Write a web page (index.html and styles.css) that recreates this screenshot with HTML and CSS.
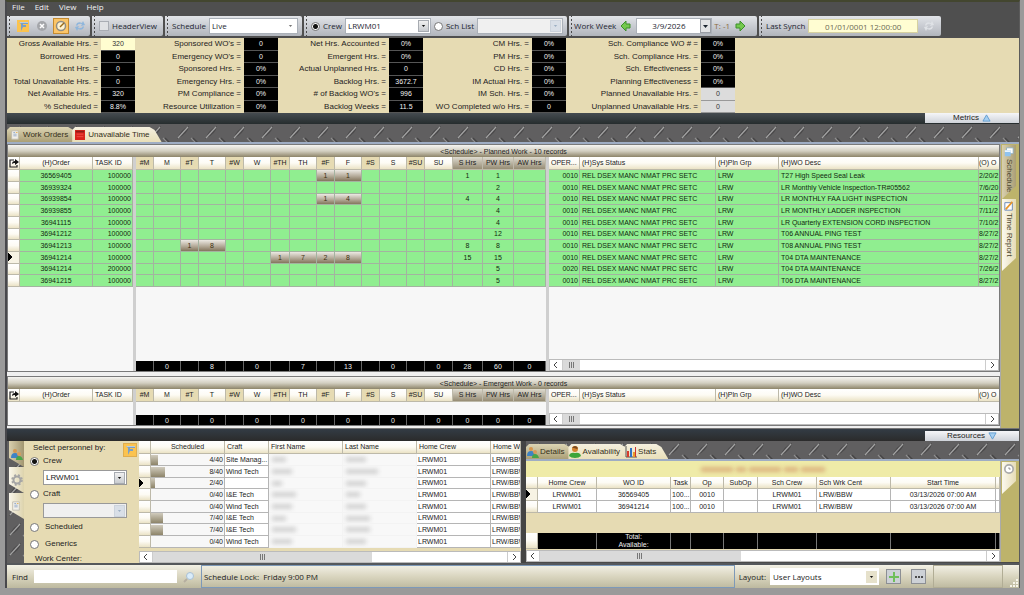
FILE: index.html
```html
<!DOCTYPE html>
<html lang="en">
<head>
<meta charset="utf-8">
<title>Schedule</title>
<link rel="stylesheet" href="styles.css">
</head>
<body>
<svg class="defs" width="0" height="0" aria-hidden="true">
  <defs>
    <pattern id="plate" width="28" height="20" patternUnits="userSpaceOnUse">
      <rect width="28" height="20" fill="#605f60"/>
      <path d="M2 15 Q6 5 14 2 Q13 10 2 15z" fill="#4a494a"/>
      <path d="M3 14 L13 3" stroke="#a3a3a3" stroke-width="1.200"/>
      <path d="M16 14 L22 20" stroke="#8e8e8e" stroke-width="1.200"/>
      <path d="M18 14 L24 20" stroke="#464546" stroke-width="1.500"/>
    </pattern>
    <symbol id="i-people" viewBox="0 0 12 12"><circle cx="4" cy="3" r="2" fill="#d6964e"/><path d="M0 10Q0 5 4 5t4 5z" fill="#3e83c4"/><circle cx="8" cy="6" r="2" fill="#d99a5a"/><path d="M5 12Q5 8 8 8t4 4z" fill="#48a548"/></symbol>
    <symbol id="i-person" viewBox="0 0 12 12"><circle cx="6" cy="3" r="3" fill="#d3842f"/><path d="M3 2Q6-2 9 2L8 3 5 2z" fill="#7c4a1c"/><path d="M0 10Q1 6 6 7q5-1 6 3-2 2-6 2t-6-2z" fill="#3da53a"/></symbol>
    <symbol id="i-stats" viewBox="0 0 12 12"><path d="M1 0v11h11" stroke="#555" fill="none"/><path d="M2 5h2v6H2z" fill="#d83c2c"/><path d="M5 2h2v9H5z" fill="#3471c2"/><path d="M8 6h2v5H8z" fill="#e89b28"/><path d="M10 1h1v10h-1z" fill="#c33"/></symbol>
    <symbol id="i-caret" viewBox="0 0 5 3"><path d="M0 0h5L2.500 3z" fill="currentColor"/></symbol>
    <symbol id="i-export" viewBox="0 0 10 10"><path d="M5 2H1v7h7V7" fill="none" stroke="#222" stroke-width="1.200"/><path d="M3 6Q3 3 6 3V1l4 3-4 3V5Q4 5 3 6z" fill="#111"/></symbol>
    <symbol id="i-filter" viewBox="0 0 12 12"><path d="M2 2h9v2H6v1h3v2H6l-2 4V4z" fill="#7ba0c4"/><path d="M2 2h9v1H3z" fill="#b7cee2"/></symbol>
    <symbol id="i-sync" viewBox="0 0 12 12"><path d="M2 5Q3 1 8 3l1-2 2 4-4 1 1-2Q4 3 3 6z" fill="currentColor"/><path d="M10 7Q9 11 4 9l-1 2-2-4 4-1-1 2q4 1 5-2z" fill="currentColor"/></symbol>
    <symbol id="i-arrow" viewBox="0 0 12 12"><path d="M6 1l5 5-5 5V8H2V4h4z" fill="#74c94e" stroke="#3c8f2b" stroke-width="1"/></symbol>
    <symbol id="i-doc" viewBox="0 0 12 12"><path d="M2 1h8v10H2z" fill="#f2f0ea" stroke="#bdb9ac"/><path d="M4 3h2M4 5h4M4 7h4" stroke="#8aa2c4"/><path d="M7 3h2" stroke="#e4ac45"/></symbol>
  </defs>
</svg>
<div class="shell">
  <nav class="menubar"><a href="#file">File</a><a href="#edit">Edit</a><a href="#view">View</a><a href="#help">Help</a></nav>

  <header class="toolbar">
    <div class="tools tools-icons">
      <button class="tool" aria-label="Filter"><svg class="ic12 amber"><use href="#i-filter"/></svg></button>
      <button class="tool" aria-label="Cancel"><svg class="ic12" viewBox="0 0 12 12"><circle cx="6" cy="6" r="5" fill="#a4a6aa"/><path d="M4 4l4 4M8 4L4 8" stroke="#fff" stroke-width="1.500"/></svg></button>
      <button class="tool active" aria-label="Edit schedule"><svg class="ic12" viewBox="0 0 12 12"><circle cx="6" cy="6" r="4.500" fill="#fff3cf" stroke="#8f8d85" stroke-width="1.500"/><path d="M5 7l4-4" stroke="#9a6a18" stroke-width="1.500"/></svg></button>
      <button class="tool sync" aria-label="Refresh"><svg class="ic12"><use href="#i-sync"/></svg></button>
    </div>
    <div class="tools tools-header"><label><input type="checkbox" class="check">HeaderView</label></div>
    <div class="tools tools-schedule"><label for="schedule">Schedule</label>
      <span class="combo grow flat"><select id="schedule"><option>Live</option></select><svg class="caret"><use href="#i-caret"/></svg></span></div>
    <div class="tools tools-crew">
      <label><input type="radio" name="source" class="radio" checked>Crew</label>
      <span class="combo grow"><select aria-label="Crew"><option>LRWM01</option></select><svg class="caret"><use href="#i-caret"/></svg></span>
      <label><input type="radio" name="source" class="radio">Sch List</label>
      <span class="combo grow off"><select aria-label="Schedule list" disabled><option></option></select><svg class="caret"><use href="#i-caret"/></svg></span>
    </div>
    <div class="tools tools-week"><label for="week">Work Week</label>
      <button class="tool" aria-label="Previous week"><svg class="ic12 flip"><use href="#i-arrow"/></svg></button>
      <span class="datebox"><input id="week" type="text" value="3/9/2026"><button aria-label="Pick date"><svg class="caret-s"><use href="#i-caret"/></svg></button></span>
      <span class="offset">T: -1</span>
      <button class="tool" aria-label="Next week"><svg class="ic12"><use href="#i-arrow"/></svg></button>
    </div>
    <div class="tools tools-synch"><label for="synch">Last Synch</label><input id="synch" class="synch" type="text" value="01/01/0001 12:00:00" readonly>
      <button class="tool pale" aria-label="Synchronize"><svg class="ic12"><use href="#i-sync"/></svg></button></div>
  </header>

  <section class="metrics" aria-label="Metrics">
    <dl class="m1">
      <dt>Gross Available Hrs. =</dt><dd class="entry">320</dd><dt>Borrowed Hrs. =</dt><dd>0</dd><dt>Lent Hrs. =</dt><dd>0</dd><dt>Total Unavailable Hrs. =</dt><dd>0</dd><dt>Net Available Hrs. =</dt><dd>320</dd><dt>% Scheduled =</dt><dd>8.8%</dd>
    </dl>
    <dl class="m2">
      <dt>Sponsored WO's =</dt><dd>0</dd><dt>Emergency WO's =</dt><dd>0</dd><dt>Sponsored Hrs. =</dt><dd>0%</dd><dt>Emergency Hrs. =</dt><dd>0%</dd><dt>PM Compliance =</dt><dd>0%</dd><dt>Resource Utilization =</dt><dd>0%</dd>
    </dl>
    <dl class="m4">
      <dt>Net Hrs. Accounted =</dt><dd>0%</dd><dt>Emergent Hrs. =</dt><dd>0%</dd><dt>Actual Unplanned Hrs. =</dt><dd>0</dd><dt>Backlog Hrs. =</dt><dd>3672.7</dd><dt># of Backlog WO's =</dt><dd>996</dd><dt>Backlog Weeks =</dt><dd>11.5</dd>
    </dl>
    <dl class="m2">
      <dt>CM Hrs. =</dt><dd>0%</dd><dt>PM Hrs. =</dt><dd>0%</dd><dt>CD Hrs. =</dt><dd>0%</dd><dt>IM Actual Hrs. =</dt><dd>0%</dd><dt>IM Sch. Hrs. =</dt><dd>0%</dd><dt>WO Completed w/o Hrs. =</dt><dd>0</dd>
    </dl>
    <dl class="m3">
      <dt>Sch. Compliance WO # =</dt><dd>0%</dd><dt>Sch. Compliance Hrs. =</dt><dd>0%</dd><dt>Sch. Effectiveness =</dt><dd>0%</dd><dt>Planning Effectiveness =</dt><dd>0%</dd><dt>Planned Unavailable Hrs. =</dt><dd class="gray">0</dd><dt>Unplanned Unavailable Hrs. =</dt><dd class="gray">0</dd>
    </dl>
  </section>

  <div class="strip"><button class="fold">Metrics <svg class="tri" viewBox="0 0 10 9"><path d="M5 1l4 7H1z" fill="#a6cff0" stroke="#5c9bd0"/></svg></button></div>

  <div class="plate">
    <svg class="plate-bg" aria-hidden="true"><rect width="100%" height="100%" fill="url(#plate)"/></svg>
    <div class="tabs" role="tablist">
      <button class="tab dim" role="tab"><svg class="ic10"><use href="#i-doc"/></svg>Work Orders</button>
      <button class="tab" role="tab" aria-selected="true"><svg class="ic10" viewBox="0 0 12 12"><path d="M0 0h12v12H0z" fill="#d9231c"/><path d="M1 1h10v2H1z" fill="#8f1d16"/><path d="M2 5h8M2 8h8" stroke="#f0544a"/></svg>Unavailable Time</button>
    </div>
  </div>

  <main class="work">
    <div class="panels">
      <section class="panel planned">
        <h2>&lt;Schedule&gt; - Planned Work - 10 records</h2>
        <div class="panes">
          <div class="pane">
            <table class="grid orders">
              <colgroup><col class="c12"><col class="c73"><col></colgroup>
              <thead><tr><th><svg class="ic10"><use href="#i-export"/></svg></th><th>(H)Order</th><th class="l">TASK ID</th></tr></thead>
              <tbody>
                <tr><th></th><td>36569405</td><td class="r">100000</td></tr>
                <tr><th></th><td>36939324</td><td class="r">100000</td></tr>
                <tr><th></th><td>36939854</td><td class="r">100000</td></tr>
                <tr><th></th><td>36939855</td><td class="r">100000</td></tr>
                <tr><th></th><td>36941115</td><td class="r">100000</td></tr>
                <tr><th></th><td>36941212</td><td class="r">100000</td></tr>
                <tr><th></th><td>36941213</td><td class="r">100000</td></tr>
                <tr><th class="cur"></th><td>36941214</td><td class="r">100000</td></tr>
                <tr><th></th><td>36941214</td><td class="r">200000</td></tr>
                <tr><th></th><td>36941215</td><td class="r">100000</td></tr>
              </tbody>
            </table>
          </div>
          <div class="pane">
            <table class="grid days">
              <colgroup><col class="c18"><col class="c27"><col class="c18"><col class="c27"><col class="c18"><col class="c27"><col class="c19"><col class="c27"><col class="c18"><col class="c27"><col class="c18"><col class="c27"><col class="c18"><col class="c28"><col class="c30"><col class="c31"><col></colgroup>
              <thead><tr><th class="k">#M</th><th>M</th><th class="k">#T</th><th>T</th><th class="k">#W</th><th>W</th><th class="k">#TH</th><th>TH</th><th class="k">#F</th><th>F</th><th class="k">#S</th><th>S</th><th class="k">#SU</th><th>SU</th><th class="s">S Hrs</th><th class="s">PW Hrs</th><th class="s">AW Hrs</th></tr></thead>
              <tbody>
                <tr><td><td><td><td><td><td><td><td><td class="h">1<td class="h">1<td><td><td><td><td>1<td>1<td></tr>
                <tr><td><td><td><td><td><td><td><td><td><td><td><td><td><td><td><td>2<td></tr>
                <tr><td><td><td><td><td><td><td><td><td class="h">1<td class="h">4<td><td><td><td><td>4<td>4<td></tr>
                <tr><td><td><td><td><td><td><td><td><td><td><td><td><td><td><td><td>4<td></tr>
                <tr><td><td><td><td><td><td><td><td><td><td><td><td><td><td><td><td>4<td></tr>
                <tr><td><td><td><td><td><td><td><td><td><td><td><td><td><td><td><td>12<td></tr>
                <tr><td><td><td class="h">1<td class="h">8<td><td><td><td><td><td><td><td><td><td><td>8<td>8<td></tr>
                <tr><td><td><td><td><td><td><td class="h">1<td class="h">7<td class="h">2<td class="h">8<td><td><td><td><td>15<td>15<td></tr>
                <tr><td><td><td><td><td><td><td><td><td><td><td><td><td><td><td><td>5<td></tr>
                <tr><td><td><td><td><td><td><td><td><td><td><td><td><td><td><td><td>5<td></tr>
              </tbody>
            </table>
            <table class="grid days totals">
              <colgroup><col class="c18"><col class="c27"><col class="c18"><col class="c27"><col class="c18"><col class="c27"><col class="c19"><col class="c27"><col class="c18"><col class="c27"><col class="c18"><col class="c27"><col class="c18"><col class="c28"><col class="c30"><col class="c31"><col></colgroup>
              <tbody><tr><td><td>0<td><td>8<td><td>0<td><td>7<td><td>13<td><td>0<td><td>0<td>28<td>60<td>0</tr></tbody>
            </table>
          </div>
          <div class="pane">
            <table class="grid info">
              <colgroup><col class="c31"><col class="c136"><col class="c63"><col><col class="c20"></colgroup>
              <thead><tr><th>OPER...</th><th>(H)Sys Status</th><th>(H)Pln Grp</th><th>(H)WO Desc</th><th>(O) O</th></tr></thead>
              <tbody>
                <tr><td>0010</td><td>REL DSEX MANC NMAT PRC SETC</td><td>LRW</td><td>T27 High Speed Seal Leak</td><td>2/20/2</td></tr>
                <tr><td>0010</td><td>REL DSEX MANC NMAT PRC SETC</td><td>LRW</td><td>LR Monthly Vehicle Inspection-TR#05562</td><td>7/6/20</td></tr>
                <tr><td>0010</td><td>REL DSEX MANC NMAT PRC SETC</td><td>LRW</td><td>LR MONTHLY FAA LIGHT INSPECTION</td><td>7/11/2</td></tr>
                <tr><td>0010</td><td>REL DSEX MANC NMAT PRC</td><td>LRW</td><td>LR MONTHLY LADDER INSPECTION</td><td>7/11/2</td></tr>
                <tr><td>0010</td><td>REL DSEX MANC NMAT PRC SETC</td><td>LRW</td><td>LR Quarterly EXTENSION CORD INSPECTION</td><td>7/10/2</td></tr>
                <tr><td>0010</td><td>REL DSEX MANC NMAT PRC SETC</td><td>LRW</td><td>T06 ANNUAL PING TEST</td><td>8/27/2</td></tr>
                <tr><td>0010</td><td>REL DSEX MANC NMAT PRC SETC</td><td>LRW</td><td>T08 ANNUAL PING TEST</td><td>8/27/2</td></tr>
                <tr><td>0010</td><td>REL DSEX MANC NMAT PRC SETC</td><td>LRW</td><td>T04 DTA MAINTENANCE</td><td>8/27/2</td></tr>
                <tr><td>0020</td><td>REL DSEX MANC NMAT PRC SETC</td><td>LRW</td><td>T04 DTA MAINTENANCE</td><td>7/26/2</td></tr>
                <tr><td>0010</td><td>REL DSEX MANC NMAT PRC SETC</td><td>LRW</td><td>T06 DTA MAINTENANCE</td><td>8/27/2</td></tr>
              </tbody>
            </table>
            <div class="scroll"><button aria-label="Scroll left"><svg viewBox="0 0 8 8"><path d="M5 1L2 4l3 3"/></svg></button><div class="track"><span class="thumb thumb-s"></span></div><button aria-label="Scroll right"><svg viewBox="0 0 8 8"><path d="M3 1l3 3-3 3"/></svg></button></div>
          </div>
        </div>
      </section>

      <section class="panel emergent">
        <h2>&lt;Schedule&gt; - Emergent Work - 0 records</h2>
        <div class="panes">
          <div class="pane">
            <table class="grid orders">
              <colgroup><col class="c12"><col class="c73"><col></colgroup>
              <thead><tr><th><svg class="ic10"><use href="#i-export"/></svg></th><th>(H)Order</th><th class="l">TASK ID</th></tr></thead>
            </table>
          </div>
          <div class="pane">
            <table class="grid days">
              <colgroup><col class="c18"><col class="c27"><col class="c18"><col class="c27"><col class="c18"><col class="c27"><col class="c19"><col class="c27"><col class="c18"><col class="c27"><col class="c18"><col class="c27"><col class="c18"><col class="c28"><col class="c30"><col class="c31"><col></colgroup>
              <thead><tr><th class="k">#M</th><th>M</th><th class="k">#T</th><th>T</th><th class="k">#W</th><th>W</th><th class="k">#TH</th><th>TH</th><th class="k">#F</th><th>F</th><th class="k">#S</th><th>S</th><th class="k">#SU</th><th>SU</th><th class="s">S Hrs</th><th class="s">PW Hrs</th><th class="s">AW Hrs</th></tr></thead>
            </table>
            <table class="grid days totals">
              <colgroup><col class="c18"><col class="c27"><col class="c18"><col class="c27"><col class="c18"><col class="c27"><col class="c19"><col class="c27"><col class="c18"><col class="c27"><col class="c18"><col class="c27"><col class="c18"><col class="c28"><col class="c30"><col class="c31"><col></colgroup>
              <tbody><tr><td><td>0<td><td>0<td><td>0<td><td>0<td><td>0<td><td>0<td><td>0<td>0<td>0<td>0</tr></tbody>
            </table>
          </div>
          <div class="pane">
            <table class="grid info">
              <colgroup><col class="c31"><col class="c136"><col class="c63"><col><col class="c20"></colgroup>
              <thead><tr><th>OPER...</th><th>(H)Sys Status</th><th>(H)Pln Grp</th><th>(H)WO Desc</th><th>(O) O</th></tr></thead>
            </table>
            <div class="scroll"><button aria-label="Scroll left"><svg viewBox="0 0 8 8"><path d="M5 1L2 4l3 3"/></svg></button><div class="track"><span class="thumb thumb-s"></span></div><button aria-label="Scroll right"><svg viewBox="0 0 8 8"><path d="M3 1l3 3-3 3"/></svg></button></div>
          </div>
        </div>
      </section>
    </div>
    <aside class="side">
      <button class="vtab dim"><svg class="ic10" viewBox="0 0 12 12"><path d="M3 1h8v7H3z" fill="#fff" stroke="#8ab"/><path d="M1 4h7v7H1z" fill="#8fc3ee"/><path d="M1 4h7v2H1z" fill="#e9f5ff"/></svg>Schedule</button>
      <button class="vtab"><svg class="ic10" viewBox="0 0 12 12"><path d="M1 2h9v9H1z" fill="#fff" stroke="#557cb5"/><path d="M2 10L10 1" stroke="#e8962a" stroke-width="2"/></svg>Time Report</button>
    </aside>
  </main>

  <div class="strip strip-low"><button class="fold">Resources <svg class="tri" viewBox="0 0 10 9"><path d="M5 8l4-7H1z" fill="#a6cff0" stroke="#5c9bd0"/></svg></button></div>

  <section class="resources">
    <div class="rail">
      <svg class="plate-bg" aria-hidden="true"><rect width="100%" height="100%" fill="url(#plate)"/></svg>
      <button class="rtab dim" aria-label="Personnel"><svg class="ic12"><use href="#i-people"/></svg></button>
      <button class="rtab" aria-label="Settings"><svg class="ic12" viewBox="0 0 12 12"><circle cx="6" cy="6" r="3.500" fill="none" stroke="#a5a5a5" stroke-width="2"/><circle cx="6" cy="6" r="5" fill="none" stroke="#a5a5a5" stroke-width="1.500" stroke-dasharray="2 2"/></svg></button>
      <button class="rtab" aria-label="Documents"><svg class="ic10"><use href="#i-doc"/></svg></button>
    </div>

    <div class="filter" role="radiogroup" aria-labelledby="filter-title">
      <div class="filter-head"><span id="filter-title">Select personnel by:</span><button class="fbtn" aria-label="Filter"><svg class="ic12"><use href="#i-filter"/></svg></button></div>
      <label><input class="radio" type="radio" name="by" checked>Crew</label>
      <span class="combo"><select aria-label="Crew name"><option>LRWM01</option></select><svg class="caret"><use href="#i-caret"/></svg></span>
      <label><input class="radio" type="radio" name="by">Craft</label>
      <span class="combo off"><select aria-label="Craft name" disabled><option></option></select><svg class="caret"><use href="#i-caret"/></svg></span>
      <label class="wide"><input class="radio" type="radio" name="by">Scheduled</label>
      <label class="wide gap3"><input class="radio" type="radio" name="by">Generics</label>
      <span class="center-title">Work Center:</span>
    </div>

    <div class="people">
      <table class="grid staff">
        <colgroup><col class="c12"><col class="c74"><col class="c44"><col class="c74"><col class="c74"><col class="c74"><col></colgroup>
        <thead><tr><th></th><th>Scheduled</th><th class="l">Craft</th><th class="l">First Name</th><th class="l">Last Name</th><th class="l">Home Crew</th><th class="l">Home Wrk</th></tr></thead>
        <tbody>
          <tr><th></th><td class="load"><i style="width:10%"></i>4/40</td><td>Site Manag...</td><td class="veil"><b class="w14"></b></td><td class="veil"><b class="w20"></b></td><td>LRWM01</td><td>LRW/BBW</td></tr>
          <tr><th></th><td class="load"><i style="width:20%"></i>8/40</td><td>Wind Tech</td><td class="veil"><b class="w20"></b></td><td class="veil"><b class="w32"></b></td><td>LRWM01</td><td>LRW/BBW</td></tr>
          <tr><th class="cur"></th><td class="load"><i style="width:5%"></i>2/40</td><td></td><td class="veil"><b class="w10"></b></td><td class="veil"><b class="w20"></b></td><td>LRWM01</td><td>LRW/BBW</td></tr>
          <tr><th></th><td class="load"><i style="width:0%"></i>0/40</td><td>I&amp;E Tech</td><td class="veil"><b class="w24"></b></td><td class="veil"><b class="w14"></b></td><td>LRWM01</td><td>LRW/BBW</td></tr>
          <tr><th></th><td class="load"><i style="width:0%"></i>0/40</td><td>Wind Tech</td><td class="veil"><b class="w20"></b></td><td class="veil"><b class="w20"></b></td><td>LRWM01</td><td>LRW/BBW</td></tr>
          <tr><th></th><td class="load"><i style="width:17.500%"></i>7/40</td><td>I&amp;E Tech</td><td class="veil"><b class="w14"></b></td><td class="veil"><b class="w24"></b></td><td>LRWM01</td><td>LRW/BBW</td></tr>
          <tr><th></th><td class="load"><i style="width:17.500%"></i>7/40</td><td>I&amp;E Tech</td><td class="veil"><b class="w24"></b></td><td class="veil"><b class="w24"></b></td><td>LRWM01</td><td>LRW/BBW</td></tr>
          <tr><th></th><td class="load"><i style="width:0%"></i>0/40</td><td>Wind Tech</td><td class="veil"><b class="w20"></b></td><td class="veil"><b class="w20"></b></td><td>LRWM01</td><td>LRW/BBW</td></tr>
        </tbody>
      </table>
      <div class="scroll"><button aria-label="Scroll left"><svg viewBox="0 0 8 8"><path d="M5 1L2 4l3 3"/></svg></button><div class="track"><span class="thumb thumb-l"></span></div><button aria-label="Scroll right"><svg viewBox="0 0 8 8"><path d="M3 1l3 3-3 3"/></svg></button></div>
    </div>

    <div class="detail">
      <div class="plate">
        <svg class="plate-bg" aria-hidden="true"><rect width="100%" height="100%" fill="url(#plate)"/></svg>
        <div class="tabs" role="tablist">
          <button class="tab dim" role="tab"><svg class="ic12"><use href="#i-people"/></svg>Details</button>
          <button class="tab" role="tab"><svg class="ic12"><use href="#i-person"/></svg>Availability</button>
          <button class="tab" role="tab"><svg class="ic12"><use href="#i-stats"/></svg>Stats</button>
        </div>
      </div>
      <div class="detail-body">
        <div class="detail-main">
          <div class="notice"><b class="w32"></b><b class="w10"></b><b class="w32"></b><b class="w14"></b><b class="w24"></b></div>
          <table class="grid bookings">
            <colgroup><col class="c12"><col class="c59"><col class="c74"><col class="c20"><col class="c33"><col class="c34"><col class="c59"><col class="c74"><col><col class="c4"></colgroup>
            <thead><tr><th></th><th>Home Crew</th><th>WO ID</th><th>Task</th><th>Op</th><th>SubOp</th><th>Sch Crew</th><th class="l">Sch Wrk Cent</th><th>Start Time</th><th></th></tr></thead>
            <tbody>
              <tr><th class="cur"></th><td>LRWM01</td><td>36569405</td><td>100...</td><td>0010</td><td></td><td>LRWM01</td><td class="l">LRW/BBW</td><td>03/13/2026 07:00 AM</td><td></td></tr>
              <tr><th></th><td>LRWM01</td><td>36941214</td><td>100...</td><td>0010</td><td></td><td>LRWM01</td><td class="l">LRW/BBW</td><td>03/13/2026 07:00 AM</td><td></td></tr>
            </tbody>
          </table>
          <table class="grid bookings sum">
            <colgroup><col class="c12"><col class="c59"><col class="c74"><col class="c20"><col class="c33"><col class="c34"><col class="c59"><col class="c74"><col><col class="c4"></colgroup>
            <tbody><tr><th></th><td></td><td>Total:<br>Available:</td><td></td><td></td><td></td><td></td><td></td><td></td><td></td></tr></tbody>
          </table>
          <div class="scroll"><button aria-label="Scroll left"><svg viewBox="0 0 8 8"><path d="M5 1L2 4l3 3"/></svg></button><div class="track"><span class="thumb thumb-m"></span></div><button aria-label="Scroll right"><svg viewBox="0 0 8 8"><path d="M3 1l3 3-3 3"/></svg></button></div>
        </div>
        <aside class="side"><button class="vtab clock" aria-label="History"><svg class="ic10" viewBox="0 0 12 12"><circle cx="6" cy="6" r="5" fill="#fff" stroke="#aaa" stroke-width="2"/><path d="M6 4v2h2" stroke="#777" fill="none"/></svg></button></aside>
      </div>
    </div>
  </section>

  <footer class="status">
    <label for="find">Find</label><input id="find" class="find" type="text">
    <button class="tool" aria-label="Search"><svg class="ic12" viewBox="0 0 12 12"><circle cx="7" cy="5" r="3.500" fill="#d9ecfa" stroke="#a9c0d4"/><path d="M4 8l-3 3" stroke="#b5aea0" stroke-width="2"/></svg></button>
    <div class="lock">Schedule Lock:&nbsp; Friday 9:00 PM</div>
    <label for="layout">Layout:</label>
    <span class="combo layout"><select id="layout"><option>User Layouts</option></select><svg class="caret"><use href="#i-caret"/></svg></span>
    <button class="sq" aria-label="Add layout"><svg class="ic12" viewBox="0 0 12 12"><path d="M6 1v10M1 6h10" stroke="#6fbf5a" stroke-width="2"/></svg></button>
    <button class="sq" aria-label="More"><svg class="ic12" viewBox="0 0 12 12"><path d="M2 6h2M5 6h2M8 6h2" stroke="#222" stroke-width="1.500"/></svg></button>
    <div class="slot"></div>
    <svg class="ic12 grip" viewBox="0 0 12 12"><path d="M9 3h2v2H9zM6 6h2v2H6zM9 6h2v2H9zM3 9h2v2H3zM6 9h2v2H6zM9 9h2v2H9z" fill="#f7f5ea"/></svg>
  </footer>
</div>
</body>
</html>
```

FILE: styles.css
```css
* { box-sizing: border-box; }

body {
  margin: 0;
  min-height: 100vh;
  display: flex;
  padding: 0 4px 7px 5px;
  background: #9a9a9a;
  color: #222;
  font: 8px/10px "Liberation Sans", Arial, sans-serif;
}

button, input, select {
  font: inherit;
  color: inherit;
  margin: 0;
  padding: 0;
  border: 0;
  border-radius: 0;
  background: none;
}

.defs { position: absolute; }
svg { display: block; flex: none; }

.shell {
  flex: 1;
  min-width: 0;
  display: flex;
  flex-direction: column;
  background: #4f4f4f;
  border-left: 2px solid #48484c;
  border-right: 1px solid #5b5b5b;
  border-top: 2px solid #43462f;
}

.ic10 { width: 10px; height: 10px; }
.ic12 { width: 12px; height: 12px; }
.flip { transform: scaleX(-1); }

/* Menu and toolbar */
.menubar {
  height: 14px;
  display: flex;
  gap: 10px;
  padding-left: 5px;
  font-family: "Open Sans", sans-serif;
}
.menubar a { color: #f2f2f2; text-decoration: none; }

.toolbar, .status { font-family: "Open Sans", sans-serif; }
.toolbar { display: flex; gap: 2px; height: 22px; padding-bottom: 2px; }
.tools {
  display: flex;
  align-items: center;
  gap: 3px;
  padding: 0 4px 0 7px;
  border-radius: 0 2px 2px 0;
  color: #1c2530;
  white-space: nowrap;
  background:
    radial-gradient(circle, #4a4a4a 1px, transparent 1px) 1px 2px / 3px 4px repeat-y,
    linear-gradient(#e2e4e8, #c9ccd2 50%, #b1b5bc);
}
.tools label { display: flex; align-items: center; gap: 3px; }
.tools-icons { width: 83px; padding-left: 8px; }
.tools-header { width: 71px; }
.tools-schedule { width: 137px; }
.tools-crew { width: 263px; }
.tools-week { width: 188px; gap: 2px; padding-left: 5px; }
.tools-synch { width: 182px; }

.tool { display: grid; place-items: center; flex: none; width: 16px; height: 16px; }
.amber { background: #fbc34f; }
.active { background: #fbc568; border: 1px solid #c48b31; }
.sync { color: #8fb6dc; }
.pale { color: #dfe2e6; }

.check {
  appearance: none;
  width: 10px;
  height: 10px;
  background: #dfe1e4;
  border: 1px solid #a9adb4;
}
.radio {
  appearance: none;
  width: 9px;
  height: 9px;
  flex: none;
  border: 1px solid #777;
  border-radius: 50%;
  background: #fff;
}
.radio:checked { background: radial-gradient(circle, #111 2px, #fff 3px); }

.combo { display: grid; align-items: center; height: 16px; background: #fff; border: 1px solid #aab0b8; }
.grow { flex: 1; }
.combo select { appearance: none; grid-area: 1 / 1; width: 100%; padding-left: 2px; }
.caret {
  grid-area: 1 / 1;
  justify-self: end;
  width: 11px;
  height: 12px;
  margin-right: 1px;
  padding: 4px 2px;
  color: #111;
  background: linear-gradient(#f0f0f0, #c9ccd0);
  border: 1px solid #a7abb1;
  pointer-events: none;
}
.flat .caret { background: none; border: 0; color: #777; padding: 5px 3px; }
.off { background: #f0f0f0; }
.off .caret { color: #9db0c4; background: #d9dfe7; border-color: #ccd3dc; }

.datebox { display: flex; width: 76px; height: 16px; background: #fff; border: 1px solid #aab0b8; }
.datebox input { width: 63px; flex: 1; text-align: center; }
.datebox button { width: 11px; display: grid; place-items: center; background: #e3e4e6; border: 1px solid #9a9ea5; }
.caret-s { width: 5px; height: 3px; }
.offset { color: #8b6a3c; }
.synch { flex: 1; min-width: 0; height: 14px; text-align: center; background: #fffdd2; border: 1px solid #d6d1a0; color: #6b6a55; }

/* Metrics */
.metrics { display: flex; height: 75px; background: #e6dbb3; overflow: hidden; }
.metrics dl {
  margin: 0;
  display: grid;
  grid-template-columns: 1fr 34px;
  grid-auto-rows: 1fr;
  align-items: stretch;
  text-align: right;
  line-height: 11px;
}
.m1 { width: 128px; }
.m2 { width: 143px; }
.m3 { width: 169px; }
.m4 { width: 145px; }
.metrics dt { padding-right: 3px; white-space: nowrap; color: #24221d; }
.metrics dd {
  margin: 0;
  background: #000;
  color: #f2f2f2;
  text-align: center;
  font-size: 7px;
  border-bottom: 1px solid #555;
}
.metrics .entry { background: #fffdd0; color: #333; }
.metrics .gray { background: #dcdcdc; color: #333; border-color: #999; }

.strip {
  display: flex;
  justify-content: flex-end;
  height: 11px;
  background: linear-gradient(#454b50, #262d2e);
}
.strip-low { height: 13px; padding-top: 2px; border-top: 1px solid #777; background: linear-gradient(#333c45, #2b2b2b); }
.fold {
  width: 94px;
  height: 10px;
  display: flex;
  align-items: center;
  justify-content: center;
  gap: 3px;
  background: linear-gradient(#f5f6f8, #cfd3d9);
}
.tri { width: 9px; height: 8px; }

/* Tread plate and tabs */
.plate, .rail { position: relative; }
.plate-bg { position: absolute; inset: 0; width: 100%; height: 100%; }
.plate { height: 20px; border-bottom: 2px solid #9fadc4; flex: none; }
.tabs { position: relative; display: flex; height: 18px; padding-top: 3px; }
.tab {
  display: flex;
  align-items: center;
  gap: 3px;
  margin-right: -8px;
  padding: 0 12px 0 3px;
  color: #35301a;
  background: linear-gradient(#f5f0df, #e9dfb9);
  clip-path: polygon(3px 0, calc(100% - 12px) 0, calc(100% - 7px) 3px, 100% 100%, 0 100%, 0 3px);
}
.tab.dim { background: linear-gradient(#ddd5b4, #ab9f76); }
.detail .tab { gap: 1px; padding-left: 1px; }

/* Work grids */
.work { flex: 1; display: flex; background: #6e6e6e; }
.panels { flex: 1; min-width: 0; display: flex; flex-direction: column; gap: 4px; padding-bottom: 2px; background: #f0f0f0; }
.panel { display: flex; flex-direction: column; border: 1px solid #7a7a7a; background: #cfcfcf; }
.planned { flex: 1; }
.emergent { height: 50px; }
.panel h2 {
  margin: 0;
  height: 12px;
  font-size: 7px;
  line-height: 13px;
  font-weight: normal;
  text-align: center;
  background: linear-gradient(#f6f5f2, #d3cfc1 50%, #8d8469);
}
.panes { flex: 1; display: grid; grid-template-columns: 125px 410px 1fr; gap: 3px; min-height: 0; }
.pane { min-width: 0; display: flex; flex-direction: column; background: #f7f7f7; }
.pane .totals, .pane .scroll { margin-top: auto; }

.grid { width: 100%; table-layout: fixed; border-collapse: separate; border-spacing: 0; font-size: 7px; line-height: 10px; }
.grid th, .grid td {
  padding: 0 1px;
  overflow: hidden;
  white-space: nowrap;
  font-weight: normal;
  text-align: center;
  border-right: 1px solid #a3b3a0;
  border-bottom: 1px solid #a3b3a0;
}
.grid th { background: linear-gradient(#fff, #fdfbf4 50%, #ebe3c6); border-color: #bdb9a9; }
.grid thead tr { height: 13px; }
.grid tbody tr { height: 12px; }
.grid tbody tr:nth-child(3n) { height: 11px; }
.grid td { background: #90ee90; color: #10290f; }
.grid .l, .info th, .info td { text-align: left; padding-left: 2px; }
.grid .r, .info td:first-child { text-align: right; }
.info tr :last-child { padding: 0; border-right: 0; }
.grid th.k { background: #e6dbb3; }
.grid th.s { background: linear-gradient(#dedbd0, #968c74); }
.grid td.h { background: linear-gradient(#ece9e3, #b5ab9a 55%, #84765d); color: #40300f; }
.grid th.cur { background: linear-gradient(to bottom right, #000 50%, transparent 51%) 0 5px / 4px 4px no-repeat, linear-gradient(to top right, #000 50%, transparent 51%) 0 1px / 4px 4px no-repeat, #f7f3e4; }
.grid.totals tbody tr { height: 10px; }
.grid.totals td { background: #000; color: #eee; line-height: 9px; border-color: #666; border-bottom: 0; }

.c4 { width: 4px; } .c12 { width: 12px; } .c18 { width: 18px; } .c19 { width: 19px; } .c20 { width: 20px; }
.c27 { width: 27px; } .c28 { width: 28px; } .c30 { width: 30px; } .c31 { width: 31px; } .c33 { width: 33px; }
.c34 { width: 34px; } .c44 { width: 44px; } .c59 { width: 59px; } .c63 { width: 63px; } .c73 { width: 73px; }
.c74 { width: 74px; } .c136 { width: 136px; }

.scroll { display: flex; height: 12px; background: #fff; border: 1px solid #bbb; }
.scroll button { width: 12px; display: grid; place-items: center; background: #fff; }
.scroll svg { width: 8px; height: 8px; fill: none; stroke: #444; }
.track { flex: 1; display: flex; border: solid #ccc; border-width: 0 1px; }
.thumb { background: #dadada; }
.thumb::before { content: ""; display: block; width: 6px; height: 6px; margin: 2px auto; background: repeating-linear-gradient(90deg, #777 0 1px, #dadada 1px 2px); }
.thumb-s { width: 17px; }
.thumb-m { width: 45%; }
.thumb-l { width: 62%; }

.side { width: 19px; flex: none; padding: 1px 4px 0 1px; background: #bdb36b; border-left: 1px solid #aaa; }
.vtab {
  display: flex;
  align-items: center;
  gap: 2px;
  width: 14px;
  height: 72px;
  padding: 2px 0;
  writing-mode: vertical-rl;
  color: #4b4530;
  background: linear-gradient(90deg, #fbf9ef, #e6dcb6);
  clip-path: polygon(0 0, 100% 0, 100% calc(100% - 13px), 0 100%);
}
.vtab.dim { height: 54px; background: linear-gradient(90deg, #d9d0ae, #aa9e76); }
.vtab.clock { height: 32px; }

/* Resources */
.resources {
  display: grid;
  grid-template-columns: 17px 115px minmax(0, 382fr) minmax(0, 498fr);
  height: 122px;
  background: #4a4a4a;
}
.rail { overflow: hidden; }
.rtab {
  position: relative;
  display: block;
  width: 15px;
  height: 26px;
  margin-left: 2px;
  padding: 2px;
  background: linear-gradient(90deg, #faf7ec, #ddd3ac);
  clip-path: polygon(0 0, 100% 0, 100% 100%, 0 calc(100% - 9px));
}
.rtab.dim { background: linear-gradient(90deg, #d9d0ae, #a29670); }

.filter { display: flex; flex-direction: column; overflow: hidden; padding: 0 12px 0 6px; background: #e6dbb3; white-space: nowrap; }
.filter > * { flex: none; }
.filter-head { display: flex; align-items: center; height: 13px; margin-right: -10px; padding-left: 3px; justify-content: space-between; }
.fbtn { align-self: flex-start; margin-top: 2px; width: 14px; height: 14px; background: #fbc34f; border: 1px solid #dfae4e; }
.filter label { display: flex; align-items: center; gap: 4px; height: 14px; }
.filter .wide { gap: 6px; }
.filter .gap3 { margin-top: 3px; }
.filter .combo { height: 15px; margin: 2px 0 2px 13px; border-color: #999; }
.center-title { margin-top: 3px; padding-left: 5px; }

.people { display: flex; flex-direction: column; background: #e6dbb3; overflow: hidden; }
.people .scroll { margin-top: 3px; }
.grid.staff td, .grid.bookings td { background: #fff; color: #222; border-color: #b5b5b5; }
.grid.staff td { text-align: left; }
.grid.staff td.load { text-align: right; background: #f7f7f7; }
.load i { float: left; height: 10px; margin-left: -1px; background: linear-gradient(#d0cbbd, #8d8469); }
.grid.staff td.veil { background: #f8f8f8; border-color: #f3f3f3; }
.veil b { display: block; height: 5px; margin-left: 2px; background: #d2d2d2; filter: blur(2px); }
.w10 { width: 10px; } .w14 { width: 14px; } .w20 { width: 20px; } .w24 { width: 24px; } .w32 { width: 32px; }

.detail { display: flex; flex-direction: column; border-left: 5px solid #444; padding-bottom: 1px; }
.detail-body { flex: 1; display: flex; min-height: 0; }
.detail-main { flex: 1; min-width: 0; display: flex; flex-direction: column; background: #e6dbb3; }
.notice { display: flex; align-items: center; justify-content: center; gap: 3px; height: 16px; background: #efeba8; }
.notice b { height: 5px; background: #dcb47f; filter: blur(2px); }
.grid.bookings thead tr { height: 12px; }
.grid.bookings.sum { margin-top: auto; }
.grid.sum tbody tr { height: 16px; }
.grid.bookings.sum td { background: #000; color: #eee; line-height: 8px; border-color: #777; border-bottom: 0; }
.detail .scroll { margin-top: 1px; }

/* Status bar */
.status {
  display: flex;
  align-items: center;
  gap: 4px;
  height: 25px;
  padding-left: 5px;
  border-top: 2px solid #55585c;
  background: linear-gradient(#f3f1e6, #d9d5bf 50%, #bdb99f);
}
.find { width: 143px; height: 13px; background: #fff; margin-left: 2px; }
.lock { flex: 1; align-self: stretch; display: flex; align-items: center; padding-left: 2px; border: 1px solid #7d99b8; }
.layout { width: 109px; height: 17px; border-color: #fff; }
.layout .caret { background: #e6e1cb; border-color: #e6e1cb; }
.sq { width: 15px; height: 15px; margin: 0 3px; display: grid; place-items: center; background: #cdd1d6; border: 1px solid #8c8f94; }
.slot { width: 70px; align-self: stretch; border: 1px solid #b1ad95; }
.grip { align-self: flex-end; }
```
